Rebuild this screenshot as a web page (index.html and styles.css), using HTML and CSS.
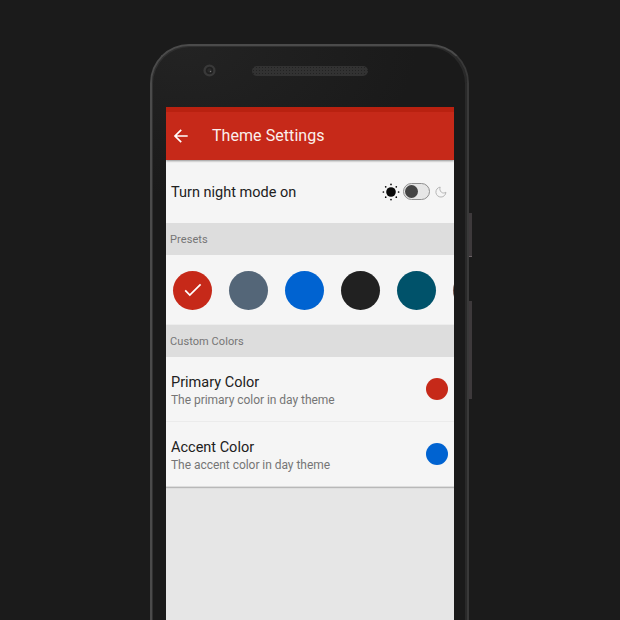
FILE: index.html
```html
<!DOCTYPE html>
<html lang="en">
<head>
<meta charset="utf-8">
<title>Theme Settings</title>
<link rel="stylesheet" href="styles.css">
</head>
<body>
<div class="phone">
  <div class="bezel">
    <svg class="camera" viewBox="0 0 14 14"><circle cx="7" cy="7" r="4.6" fill="#202020" stroke="#393939" stroke-width="2.2"/><circle cx="7" cy="7" r="2" fill="#2b2b2b"/><circle cx="8" cy="8" r=".7" fill="#777"/></svg>
    <div class="speaker"></div>
  </div>
  <main class="screen">
    <header class="bar">
      <svg class="back" viewBox="0 0 16 16"><path d="M14.7 8H2M8.2 1.8 2 8l6.2 6.2"/></svg>
      <h1>Theme Settings</h1>
    </header>
    <section class="night">
      <span class="label">Turn night mode on</span>
      <svg class="sun" viewBox="0 0 18 18"><circle cx="9" cy="9" r="4.8"/><circle cx="9" cy="1.4" r=".85"/><circle cx="9" cy="16.6" r=".85"/><circle cx="1.4" cy="9" r=".85"/><circle cx="16.6" cy="9" r=".85"/><circle cx="3.7" cy="3.8" r=".85"/><circle cx="14.3" cy="3.8" r=".85"/><circle cx="3.7" cy="14.2" r=".85"/><circle cx="14.3" cy="14.2" r=".85"/></svg>
      <span class="switch"><i></i></span>
      <svg class="moon" viewBox="0 0 12 12"><path d="M5.2 1.1A5 5 0 1 0 10.9 6.2C9.6 7.2 7.8 7.4 6.4 6.2 4.8 4.9 4.5 2.8 5.2 1.1Z"/></svg>
    </section>
    <h2>Presets</h2>
    <section class="presets">
      <span class="swatch red"><svg viewBox="0 0 18 14"><path d="M1.2 7.4 5.8 12 16.6 1.4"/></svg></span>
      <span class="swatch slate"></span>
      <span class="swatch blue"></span>
      <span class="swatch black"></span>
      <span class="swatch teal"></span>
      <span class="swatch brown"></span>
    </section>
    <h2>Custom Colors</h2>
    <section class="option">
      <div class="words"><p class="label">Primary Color</p><p class="hint">The primary color in day theme</p></div>
      <span class="dot red"></span>
    </section>
    <section class="option last">
      <div class="words"><p class="label">Accent Color</p><p class="hint">The accent color in day theme</p></div>
      <span class="dot blue"></span>
    </section>
  </main>
  <span class="key power"></span>
  <span class="key volume"></span>
</div>
</body>
</html>
```
FILE: styles.css
```css
* { box-sizing: border-box; }
body { margin: 0; height: 620px; overflow: hidden; background: #1b1b1b; font-family: Roboto, sans-serif; display: flex; }
h1, h2, p { margin: 0; font-weight: 400; }
.phone {
  position: relative; width: 319px; height: 576px; margin: 44px 0 0 150px;
  border: 2px solid #4b4b4b; border-right-color: #393939; border-bottom: 0;
  border-radius: 39px 39px 0 0;
  background: radial-gradient(ellipse 230px 150px at 35px 0, #232323, #1a1a1a);
  box-shadow: inset 1px 1px 0 #303030, inset -2px 1px 0 #292929;
}
.bezel { height: 61px; display: flex; padding: 17px 0 0 50px; gap: 35px; align-items: flex-start; }
.camera { width: 15px; height: 15px; }
.speaker {
  width: 116px; height: 10px; margin-top: 3px; border-radius: 5px;
  background: radial-gradient(circle, #222 0.6px, #323232 1px) 0 0 / 3px 3px;
}
.screen { width: 288px; height: 513px; margin-left: 14px; background: #e6e6e6; overflow: hidden; }
.bar {
  height: 53px; padding-left: 7px; display: flex; align-items: center; gap: 23px;
  background: #c62919; border-top: 5px solid #b92110;
  position: relative; box-shadow: 0 1px 2px #0006;
}
.back { width: 16px; height: 16px; fill: none; stroke: #fff; stroke-width: 1.7; }
h1 { font-size: 16px; line-height: 20px; letter-spacing: 0.06px; color: #fbefec; }
.night { height: 63px; display: flex; align-items: center; padding: 0 7px 0 5px; background: #f5f5f5; }
.label { font-size: 14.5px; line-height: 18px; color: #212121; }
.night .label { padding-top: 2px; }
.sun { width: 18px; height: 18px; margin-left: auto; fill: #080808; }
.switch { width: 27px; height: 17px; margin: 0 5px 0 3px; border: 1px solid #8f8f8f; border-radius: 9px; background: #e6e6e6; padding: 1px; }
.switch i { display: block; width: 13px; height: 13px; border-radius: 50%; background: #444; }
.moon { width: 12px; height: 12px; fill: none; stroke: #b5b5b5; stroke-width: 1; }
h2 { height: 32px; padding: 1px 0 0 4px; background: #ddd; color: #757575; font-size: 11px; line-height: 32px; letter-spacing: 0.08px; }
.presets { height: 70px; display: flex; align-items: center; gap: 17px; padding: 1px 0 0 7px; background: #f5f5f5; overflow: hidden; border-bottom: 1px solid #ededed; }
.swatch { flex: none; display: grid; place-items: center; width: 39px; height: 39px; border-radius: 50%; }
.swatch svg { width: 18px; height: 14px; fill: none; stroke: #fff; stroke-width: 1.7; }
.red { background: #c62919; }
.slate { background: #546678; }
.blue { background: #0063d1; }
.black { background: #212121; }
.teal { background: #00526a; }
.brown { background: #6d4c41; }
.option { height: 65px; display: flex; justify-content: space-between; align-items: center; padding: 0 6px 0 5px; background: #f5f5f5; border-bottom: 1px solid #ebebeb; }
.last { border-bottom-color: #ddd; box-shadow: 0 1px 1px #0003; }
.words { padding-top: 5px; }
.hint { font-size: 12px; line-height: 17px; letter-spacing: -0.04px; color: #757575; }
.dot { width: 22px; height: 22px; border-radius: 50%; }
.key { position: absolute; right: -5px; width: 3px; background: #3d393b; }
.power { top: 167px; height: 44px; border-bottom: 1px solid #6b6266; }
.volume { top: 255px; height: 98px; }
```
